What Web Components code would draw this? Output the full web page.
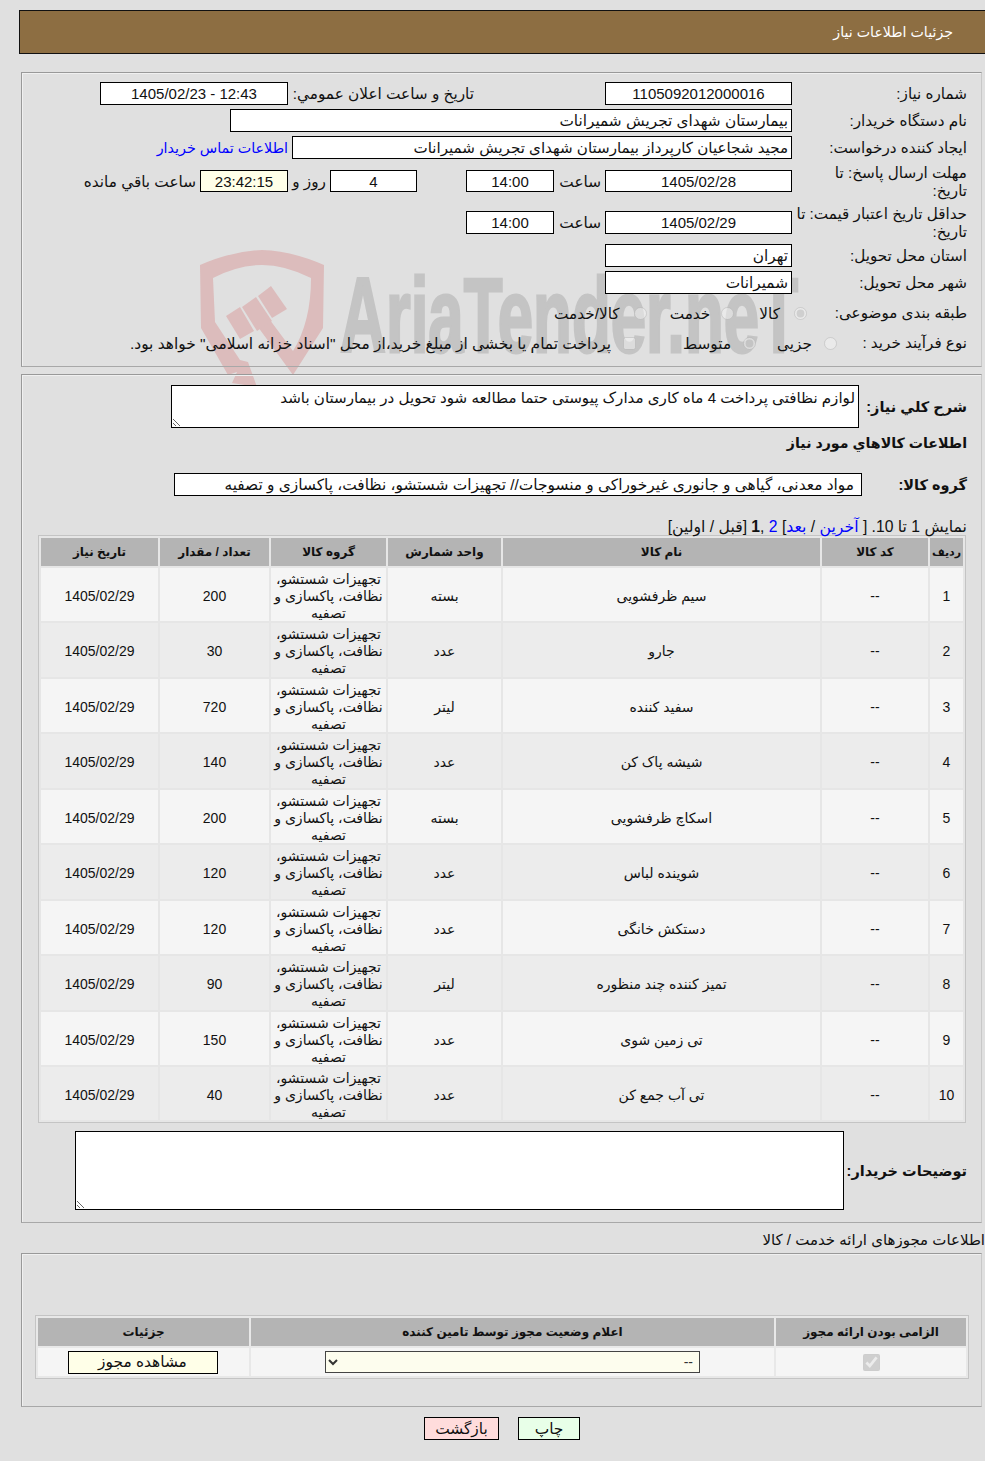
<!DOCTYPE html>
<html lang="fa" dir="rtl">
<head>
<meta charset="utf-8">
<title>جزئیات اطلاعات نیاز</title>
<style>
  html { margin: 0; padding: 0; background: #e0e0e0; }
  body { margin: 0; padding: 0; position: relative; width: 985px; height: 1461px; overflow: hidden; color: #111;
    font: 15.3px/17px "Liberation Sans", "DejaVu Sans", sans-serif; direction: rtl; }
  a { color: #00f; text-decoration: none; }
</style>
</head>
<body>
<x-watermark></x-watermark>
<x-title-bar>جزئیات اطلاعات نیاز</x-title-bar>

<x-panel style="margin-top:18px;padding:9px 14px 13px 15px">
  <x-row label="شماره نياز:">
    <x-box w="187" center>1105092012000016</x-box>
    <x-text w="182" style="margin-right:127px;">تاريخ و ساعت اعلان عمومي:</x-text>
    <x-box w="188" center ltr>1405/02/23 - 12:43</x-box>
  </x-row>
  <x-row label="نام دستگاه خريدار:" style="margin-top:4px"><x-box w="562">بیمارستان شهدای تجریش شمیرانات</x-box></x-row>
  <x-row label="ايجاد كننده درخواست:" style="margin-top:4px">
    <x-box w="500" style="font-size:15.1px">مجید شجاعیان کارپرداز بیمارستان شهدای تجریش شمیرانات</x-box>
    <x-text style="font-size:14.3px;padding-top:1px"><a href="#">اطلاعات تماس خريدار</a></x-text>
  </x-row>
  <x-row label="مهلت ارسال پاسخ: تا&lt;br&gt;تاريخ:" tall style="margin-top:5px">
    <x-box w="187" h="22" center>1405/02/28</x-box>
    <x-text w="43">ساعت</x-text>
    <x-box w="88" h="22" center>14:00</x-box>
    <x-box w="87" h="22" center style="margin-right:45px">4</x-box>
    <x-text w="30">روز و</x-text>
    <x-box w="88" h="22" center soft style="margin-right:4px">23:42:15</x-box>
    <x-text>ساعت باقي مانده</x-text>
  </x-row>
  <x-row label="حداقل تاريخ اعتبار قيمت: تا&lt;br&gt;تاريخ:" tall style="margin-top:5px">
    <x-box w="187" center>1405/02/29</x-box>
    <x-text w="43">ساعت</x-text>
    <x-box w="88" center>14:00</x-box>
  </x-row>
  <x-row label="استان محل تحويل:" style="margin-top:3px"><x-box w="187">تهران</x-box></x-row>
  <x-row label="شهر محل تحويل:" style="margin-top:4px"><x-box w="187">شمیرانات</x-box></x-row>
  <x-row label="طبقه بندی موضوعی:" lw="160" style="margin-top:9px;height:20px">
    <x-choice checked gap="14">کالا</x-choice>
    <x-choice gap="11" style="margin-right:21px">خدمت</x-choice>
    <x-choice gap="14" style="margin-right:19px">کالا/خدمت</x-choice>
  </x-row>
  <x-row label="نوع فرآیند خرید :" lw="130" style="margin-top:10px;height:20px">
    <x-choice gap="12">جزیی</x-choice>
    <x-choice gap="12" checked style="margin-right:17px">متوسط</x-choice>
    <x-choice gap="12" square style="margin-right:43px;font-size:15.45px">پرداخت تمام یا بخشی از مبلغ خرید،از محل "اسناد خزانه اسلامی" خواهد بود.</x-choice>
  </x-row>
</x-panel>

<x-panel style="margin-top:7px;padding:10px 14px 12px 15px">
  <x-row label="شرح كلي نياز:" lw="108" strong>
    <x-note w="688" h="43" style="font-size:15.1px">لوازم نظافتی پرداخت 4 ماه کاری مدارک پیوستی حتما مطالعه شود تحویل در بیمارستان باشد</x-note>
  </x-row>
  <x-heading style="margin-top:7px">اطلاعات كالاهاي مورد نياز</x-heading>
  <x-row label="گروه كالا:" lw="105" strong style="margin-top:21px">
    <x-box w="688" pad="7" style="font-size:15.4px">مواد معدنی، گیاهی و جانوری غیرخوراکی و منسوجات// تجهیزات شستشو، نظافت، پاکسازی و تصفیه</x-box>
  </x-row>
  <x-text style="display:block;margin-top:22px;height:17px;font-size:15.7px">نمایش 1 تا 10. [ <a href="#">آخرین</a> / <a href="#">بعد</a>] <a href="#">2</a> ,<b>1</b> [قبل / اولین]</x-text>
  <x-items-table style="margin-right:1px"></x-items-table>
  <x-row label="توضیحات خریدار:" lw="123" strong style="margin-top:8px">
    <x-note w="769" h="79"></x-note>
  </x-row>
</x-panel>

<x-text style="display:block;margin-top:8px;height:17px;white-space:nowrap;font-size:15px">اطلاعات مجوزهای ارائه خدمت / کالا</x-text>

<x-panel style="margin-top:5px;padding:61px 12px 27px 13px">
  <x-license-table></x-license-table>
</x-panel>

<x-actions>
  <x-btn w="75" bg="#ffdcdc">بازگشت</x-btn>
  <x-btn w="62" bg="#e8ffe8">چاپ</x-btn>
</x-actions>

<script>
const FONT = '"Liberation Sans", "DejaVu Sans", sans-serif';

class Base extends HTMLElement {
  constructor() {
    super();
    this.attachShadow({ mode: 'open' });
  }
  connectedCallback() {
    this.render();
  }
}

class TitleBar extends Base {
  render() {
    this.shadowRoot.innerHTML = `
      <style>
        :host { display: flex; align-items: center; box-sizing: border-box; height: 44px; margin: 10px 0 0 0; width: 966px;
          background: #8d6e42; border: 1px solid #111; border-right: none;
          color: #fff; font-size: 14.2px; padding-right: 32px; }
      </style>
      <slot></slot>`;
  }
}

class Panel extends Base {
  render() {
    this.shadowRoot.innerHTML = `
      <style>
        :host { display: block; box-sizing: border-box; width: 961px; margin-right: 3px;
          border: 1px solid #999; border-right-color: #c8c8c8; border-bottom-color: #a8a8a8;
          box-shadow: inset 1px 1px 0 #f0f0f0; }
      </style>
      <slot></slot>`;
  }
}

class Row extends Base {
  render() {
    const lw = this.getAttribute('lw') || 175;
    const strong = this.hasAttribute('strong');
    const label = this.getAttribute('label');
    this.shadowRoot.innerHTML = `
      <style>
        :host { display: flex; align-items: center; direction: rtl; }
        .label { flex: none; width: ${lw}px; box-sizing: border-box; line-height: 18px;
          font-weight: ${strong ? 'bold' : 'normal'}; font-size: ${strong ? '14.5px' : '15.2px'};
          white-space: nowrap; }
        .value { display: flex; flex: 1; align-items: center; gap: 4px; min-width: 0; }
        :host([tall]) .label { height: 36px; }
        :host([tall]) .value { margin-top: -2px; }
      </style>
      <div class="label">${label}</div>
      <div class="value"><slot></slot></div>`;
  }
}

class Box extends Base {
  render() {
    const w = this.getAttribute('w');
    const h = this.getAttribute('h') || 23;
    const center = this.hasAttribute('center');
    const ltr = this.hasAttribute('ltr');
    const soft = this.hasAttribute('soft');
    const pad = this.getAttribute('pad') || 3;
    this.shadowRoot.innerHTML = `
      <style>
        :host { display: block; flex: none; box-sizing: border-box; width: ${w}px; height: ${h}px; line-height: ${h - 1}px;
          border: 1px solid #000; background: ${soft ? '#ffffe8' : '#fff'}; padding: 0 ${pad}px;
          font-size: ${center ? '15px' : '15.3px'};
          text-align: ${center ? 'center' : 'right'}; direction: ${ltr ? 'ltr' : 'rtl'}; white-space: nowrap; overflow: hidden; }
      </style>
      <slot></slot>`;
  }
}

class TextEl extends Base {
  render() {
    const w = this.getAttribute('w');
    this.shadowRoot.innerHTML = `
      <style>
        :host { display: inline-block; flex: none; ${w ? `width:${w}px;` : ''} white-space: nowrap; }
      </style>
      <slot></slot>`;
  }
}

class Heading extends Base {
  render() {
    this.shadowRoot.innerHTML = `
      <style>
        :host { display: block; font-weight: bold; font-size: 14.2px; line-height: 17px; }
      </style>
      <slot></slot>`;
  }
}

// radio or checkbox with its caption, always disabled like the source form
class Choice extends Base {
  render() {
    const type = this.hasAttribute('square') ? 'checkbox' : 'radio';
    const checked = this.hasAttribute('checked') ? 'checked' : '';
    const gap = this.getAttribute('gap') || 12;
    this.shadowRoot.innerHTML = `
      <style>
        :host { display: inline-flex; align-items: center; flex: none; gap: ${gap}px; white-space: nowrap; }
        input { margin: 0; width: 13px; height: 13px; flex: none; opacity: .75; }
      </style>
      <input type="${type}" disabled ${checked}><span><slot></slot></span>`;
  }
}

class Note extends Base {
  render() {
    const w = this.getAttribute('w');
    const h = this.getAttribute('h');
    this.shadowRoot.innerHTML = `
      <style>
        :host { display: block; flex: none; box-sizing: border-box; width: ${w}px; height: ${h}px;
          border: 1px solid #000; background: #fff; padding: 3px; font-size: 15px; overflow: auto; resize: both; }
      </style>
      <slot></slot>`;
  }
}

const ITEMS = [
  ['1', 'سیم ظرفشویی', 'بسته', '200'],
  ['2', 'جارو', 'عدد', '30'],
  ['3', 'سفید کننده', 'لیتر', '720'],
  ['4', 'شیشه پاک کن', 'عدد', '140'],
  ['5', 'اسکاچ ظرفشویی', 'بسته', '200'],
  ['6', 'شوینده لباس', 'عدد', '120'],
  ['7', 'دستکش خانگی', 'عدد', '120'],
  ['8', 'تمیز کننده چند منظوره', 'لیتر', '90'],
  ['9', 'تی زمین شوی', 'عدد', '150'],
  ['10', 'تی آب جمع کن', 'عدد', '40']
];
const GROUP = 'تجهیزات شستشو، نظافت، پاکسازی و تصفیه';
const GRID_STYLE = `
  .grid { display: grid; gap: 2px; padding: 2px; border: 1px solid #c4c4c4; direction: rtl; background: #e6e6e6; font-size: 14px; }
  .th { display: flex; align-items: center; justify-content: center; background: #b4b4b4; font-weight: bold; font-size: 12px; color: #111; }
  .td { display: flex; align-items: center; justify-content: center; text-align: center; line-height: 17px; padding: 0 3px; }
`;

class ItemsTable extends Base {
  render() {
    const heads = ['ردیف', 'کد کالا', 'نام کالا', 'واحد شمارش', 'گروه کالا', 'تعداد / مقدار', 'تاریخ نیاز'];
    const rows = ITEMS.map((it, i) => {
      const bg = i % 2 ? '#ececec' : '#f5f5f5';
      const cells = [it[0], '--', it[1], it[2], GROUP, it[3], '1405/02/29'];
      return cells.map(c => `<div class="td" style="background:${bg}">${c}</div>`).join('');
    }).join('');
    this.shadowRoot.innerHTML = `
      <style>
        :host { display: block; box-sizing: border-box; width: 928px; }
        ${GRID_STYLE}
        .grid { grid-template-columns: 33px 106px 317px 113px 115px 109px 117px; grid-template-rows: 28px repeat(10, 53.45px); }
        .td { padding-top: 3.6px; }
        .th:first-child { font-size: 11px; }
      </style>
      <div class="grid">${heads.map(h => `<div class="th">${h}</div>`).join('')}${rows}</div>`;
  }
}

class LicenseTable extends Base {
  render() {
    this.shadowRoot.innerHTML = `
      <style>
        :host { display: block; box-sizing: border-box; width: 934px; }
        ${GRID_STYLE}
        .grid { grid-template-columns: 190px 523px 211px; grid-template-rows: 28px 28px; background: #e8e8e8; }
        .th { padding-top: 1px; }
        .td { background: #f5f5f5; }
        .td x-btn { margin-right: 2px; }
        input { margin: 0; width: 17px; height: 17px; }
        select { width: 375px; height: 22px; box-sizing: border-box; background: #fdfdee; border: 1px solid #444; border-radius: 0; font: inherit; color: #333; padding: 0 2px; }
      </style>
      <div class="grid">
        <div class="th">الزامی بودن ارائه مجوز</div>
        <div class="th">اعلام وضعیت مجوز توسط تامین کننده</div>
        <div class="th">جزئیات</div>
        <div class="td"><input type="checkbox" checked disabled></div>
        <div class="td"><select><option>--</option></select></div>
        <div class="td"><x-btn w="150" bg="#ffffe8">مشاهده مجوز</x-btn></div>
      </div>`;
  }
}

class Btn extends Base {
  render() {
    const w = this.getAttribute('w');
    const bg = this.getAttribute('bg');
    this.shadowRoot.innerHTML = `
      <style>
        :host { display: inline-block; flex: none; }
        button { display: block; box-sizing: border-box; width: ${w}px; height: 23px; padding: 0; margin: 0; border: 1px solid #000; border-radius: 0;
          background: ${bg}; color: #111; font: 15.4px/20px ${FONT}; cursor: pointer; }
      </style>
      <button><slot></slot></button>`;
  }
}

class Actions extends Base {
  render() {
    this.shadowRoot.innerHTML = `
      <style>
        :host { display: flex; direction: ltr; flex-direction: row; gap: 19px; padding: 10px 0 0 424px; }
      </style>
      <slot></slot>`;
  }
}

// the faded site logo behind the first panel
class Watermark extends Base {
  render() {
    this.shadowRoot.innerHTML = `
      <style>
        :host { position: absolute; left: 0; top: 0; z-index: -1; pointer-events: none; direction: ltr; }
        svg { display: block; direction: ltr; }
        text { font-family: "Liberation Sans", sans-serif; font-weight: bold; fill: #c4c4c4; stroke: #c4c4c4; stroke-width: 3px; text-anchor: start; }
      </style>
      <svg width="985" height="400" viewBox="0 0 985 400">
        <g fill="#dcbcbc">
          <path fill-rule="evenodd" d="M200 265 Q232 251 262 250 Q292 251 324 265 L323 328 L293 375 L258 327 L270 320 L293 351 Q311 322 311 278 Q285 265 262 265 Q238 265 213 278 L215 322 L240 360 L248 362 L257 387 L232 383 L237 372 L228 375 L201 328 Z"/>
          <path d="M226 316 L240 307 L254 331 L240 339 Z"/>
          <path d="M242 307 L256 297 L272 321 L257 331 Z"/>
          <path d="M258 296 L271 286 L287 309 L272 318 Z"/>
        </g>
        <text x="340" y="352" font-size="106" textLength="458" lengthAdjust="spacingAndGlyphs">AriaTender.neT</text>
      </svg>`;
  }
}

customElements.define('x-title-bar', TitleBar);
customElements.define('x-panel', Panel);
customElements.define('x-row', Row);
customElements.define('x-box', Box);
customElements.define('x-text', TextEl);
customElements.define('x-heading', Heading);
customElements.define('x-choice', Choice);
customElements.define('x-note', Note);
customElements.define('x-items-table', ItemsTable);
customElements.define('x-license-table', LicenseTable);
customElements.define('x-btn', Btn);
customElements.define('x-actions', Actions);
customElements.define('x-watermark', Watermark);
</script>
</body>
</html>
